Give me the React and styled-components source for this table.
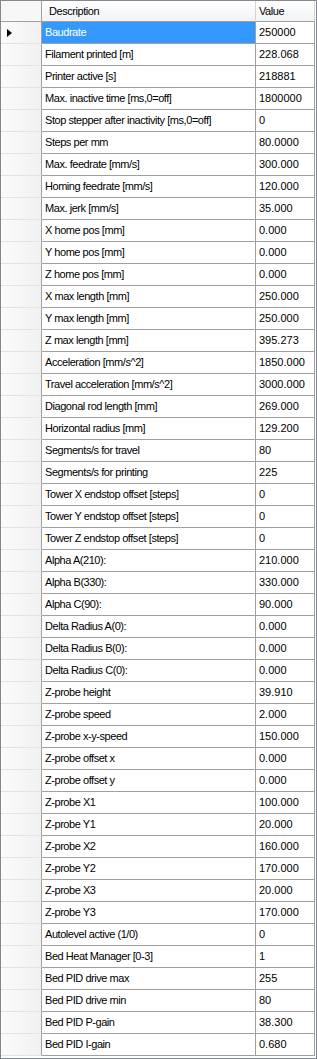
import React from "react";
import styled, { createGlobalStyle } from "styled-components";

const rows = [
  ["Baudrate", "250000"],
  ["Filament printed [m]", "228.068"],
  ["Printer active [s]", "218881"],
  ["Max. inactive time [ms,0=off]", "1800000"],
  ["Stop stepper after inactivity [ms,0=off]", "0"],
  ["Steps per mm", "80.0000"],
  ["Max. feedrate [mm/s]", "300.000"],
  ["Homing feedrate [mm/s]", "120.000"],
  ["Max. jerk [mm/s]", "35.000"],
  ["X home pos [mm]", "0.000"],
  ["Y home pos [mm]", "0.000"],
  ["Z home pos [mm]", "0.000"],
  ["X max length [mm]", "250.000"],
  ["Y max length [mm]", "250.000"],
  ["Z max length [mm]", "395.273"],
  ["Acceleration [mm/s^2]", "1850.000"],
  ["Travel acceleration [mm/s^2]", "3000.000"],
  ["Diagonal rod length [mm]", "269.000"],
  ["Horizontal radius [mm]", "129.200"],
  ["Segments/s for travel", "80"],
  ["Segments/s for printing", "225"],
  ["Tower X endstop offset [steps]", "0"],
  ["Tower Y endstop offset [steps]", "0"],
  ["Tower Z endstop offset [steps]", "0"],
  ["Alpha A(210):", "210.000"],
  ["Alpha B(330):", "330.000"],
  ["Alpha C(90):", "90.000"],
  ["Delta Radius A(0):", "0.000"],
  ["Delta Radius B(0):", "0.000"],
  ["Delta Radius C(0):", "0.000"],
  ["Z-probe height", "39.910"],
  ["Z-probe speed", "2.000"],
  ["Z-probe x-y-speed", "150.000"],
  ["Z-probe offset x", "0.000"],
  ["Z-probe offset y", "0.000"],
  ["Z-probe X1", "100.000"],
  ["Z-probe Y1", "20.000"],
  ["Z-probe X2", "160.000"],
  ["Z-probe Y2", "170.000"],
  ["Z-probe X3", "20.000"],
  ["Z-probe Y3", "170.000"],
  ["Autolevel active (1/0)", "0"],
  ["Bed Heat Manager [0-3]", "1"],
  ["Bed PID drive max", "255"],
  ["Bed PID drive min", "80"],
  ["Bed PID P-gain", "38.300"],
  ["Bed PID I-gain", "0.680"],
];

const GlobalStyle = createGlobalStyle`
  body {
    margin: 0;
    background: #ffffff;
  }
`;

const Grid = styled.div`
  box-sizing: border-box;
  width: 317px;
  height: 1059px;
  border: 1px solid #828790;
  background: #ffffff;
  overflow: hidden;
  font-family: "Liberation Sans", Arial, sans-serif;
  font-size: 11px;
  letter-spacing: -0.45px;
  color: #000000;
`;

const Line = styled.div`
  display: grid;
  grid-template-columns: 41px 214px 59px;
  height: ${(p) => (p.$header ? "21px" : "22px")};
`;

const HeaderCell = styled.div`
  box-sizing: border-box;
  height: 21px;
  line-height: 20px;
  padding-left: ${(p) => p.$pad || 0}px;
  background: linear-gradient(#ffffff, #f7f8fa 60%, #f1f2f4);
  border-right: 1px solid #d5d5d5;
  border-bottom: 1px solid #a0a0a0;
  &:first-child {
    background: #f7f7f7;
    border-right-color: #a0a0a0;
  }
`;

const RowHead = styled.div`
  box-sizing: border-box;
  display: flex;
  align-items: center;
  padding-left: 6px;
  background: linear-gradient(to right, #fbfbfb, #f1f1f1);
  border-right: 1px solid #a0a0a0;
  border-bottom: 1px solid #e4e4e4;
`;

const Arrow = styled.span`
  width: 0;
  height: 0;
  margin-top: 1px;
  border-left: 5px solid #000000;
  border-top: 4px solid transparent;
  border-bottom: 4px solid transparent;
`;

const Cell = styled.div`
  box-sizing: border-box;
  padding-left: 3px;
  line-height: 21px;
  white-space: nowrap;
  overflow: hidden;
  letter-spacing: ${(p) => (p.$numeric ? "0" : "-0.45px")};
  border-right: 1px solid #a0a0a0;
  border-bottom: 1px solid #a0a0a0;
  background: ${(p) => (p.$selected ? "#3399ff" : "#ffffff")};
  color: ${(p) => (p.$selected ? "#ffffff" : "#000000")};
`;

export default function App() {
  return (
    <>
      <GlobalStyle />
      <Grid>
        <Line $header>
          <HeaderCell />
          <HeaderCell $pad={7}>Description</HeaderCell>
          <HeaderCell $pad={3}>Value</HeaderCell>
        </Line>
        {rows.map(([name, value], i) => (
          <Line key={name}>
            <RowHead>{i === 0 && <Arrow />}</RowHead>
            <Cell $selected={i === 0}>{name}</Cell>
            <Cell $numeric>{value}</Cell>
          </Line>
        ))}
      </Grid>
    </>
  );
}
